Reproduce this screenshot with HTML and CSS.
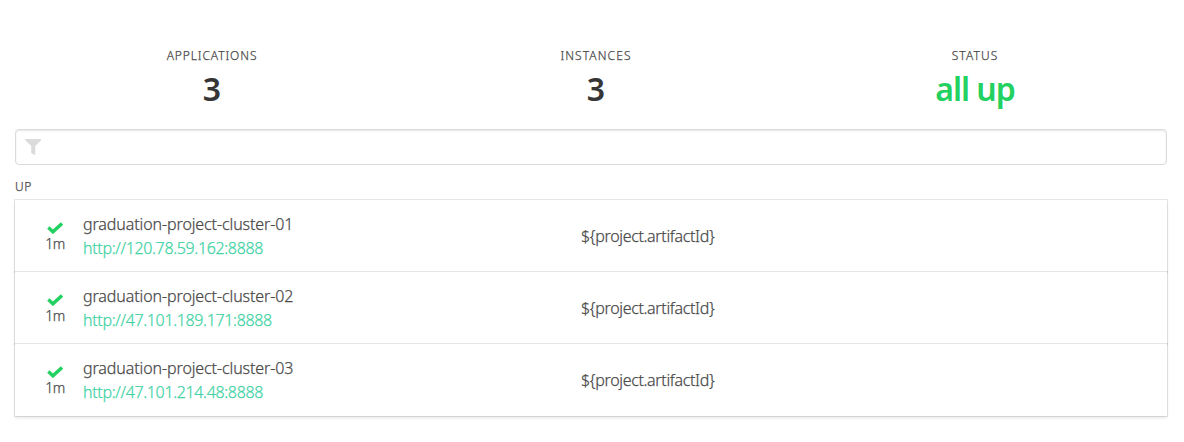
FILE: index.html
```html
<!DOCTYPE html>
<html lang="en">
<head>
<meta charset="utf-8">
<title>Applications</title>
<link rel="stylesheet" href="styles.css">
</head>
<body>
<main class="container">
  <section class="stats">
    <div class="stat"><p class="heading apps">Applications</p><p class="title">3</p></div>
    <div class="stat"><p class="heading">Instances</p><p class="title">3</p></div>
    <div class="stat"><p class="heading">Status</p><p class="title up">all up</p></div>
  </section>
  <div class="filter">
    <svg class="filter-icon" viewBox="0 0 17 17"><path d="M.5 0h15.3q.9.5.2 1.2L10.2 7v8.4q-.2.8-1 .4L6.2 14V7L.3 1.2Q-.3.5.5 0z"/></svg>
  </div>
  <p class="heading group">Up</p>
  <section class="list">
    <article class="row">
      <div class="state"><svg class="check" viewBox="0 0 16 12"><path d="M1.3 5.5l4.6 4.3L15 1.5"/></svg><span class="age">1m</span></div>
      <div class="name"><span class="label">graduation-project-cluster-01</span><a class="link">http://120.78.59.162:8888</a></div>
      <div class="version">${project.artifactId}</div>
    </article>
    <article class="row">
      <div class="state"><svg class="check" viewBox="0 0 16 12"><path d="M1.3 5.5l4.6 4.3L15 1.5"/></svg><span class="age">1m</span></div>
      <div class="name"><span class="label">graduation-project-cluster-02</span><a class="link">http://47.101.189.171:8888</a></div>
      <div class="version">${project.artifactId}</div>
    </article>
    <article class="row">
      <div class="state"><svg class="check" viewBox="0 0 16 12"><path d="M1.3 5.5l4.6 4.3L15 1.5"/></svg><span class="age">1m</span></div>
      <div class="name"><span class="label">graduation-project-cluster-03</span><a class="link">http://47.101.214.48:8888</a></div>
      <div class="version">${project.artifactId}</div>
    </article>
  </section>
</main>
</body>
</html>
```
FILE: styles.css
```css
* { box-sizing: border-box; margin: 0; padding: 0; }
body { background: #fff; color: #4a4a4a; font: 300 16px/24px "Noto Sans", "Open Sans", sans-serif; -webkit-text-stroke: .25px; }
.container { width: 1152px; margin-left: 15px; padding: 47px 0 26px; }
.stats { display: grid; grid-template-columns: 394px 374px 384px; height: 82px; text-align: center; }
.heading { font-size: 12px; line-height: 17px; letter-spacing: 1.1px; text-transform: uppercase; }
.heading.apps { letter-spacing: .9px; }
.title { font-size: 32px; line-height: 36px; font-weight: 600; color: #363636; margin-top: 7px; -webkit-text-stroke: 0; }
.title.up { color: #23d160; letter-spacing: -1px; }
.filter { height: 36px; border: 1px solid #dbdbdb; border-radius: 4px; box-shadow: inset 0 1px 2px rgba(10, 10, 10, .1); padding: 9px; }
.filter-icon { display: block; width: 17px; height: 17px; fill: #dbdbdb; }
.heading.group { margin-top: 13px; letter-spacing: .5px; }
.list { margin-top: 5px; }
.row { display: flex; align-items: center; height: 72px; box-shadow: 0 2px 3px rgba(10, 10, 10, .1), 0 0 0 1px rgba(10, 10, 10, .1); background: #fff; }
.state { width: 40px; margin-left: 20px; display: flex; flex-direction: column; align-items: center; padding-top: 4px; }
.check { width: 16px; height: 12px; fill: none; stroke: #23d160; stroke-width: 3.4; }
.age { font-size: 14px; line-height: 20px; letter-spacing: -.6px; }
.name { width: 498px; margin-left: 8px; display: flex; flex-direction: column; align-items: flex-start; }
.label { letter-spacing: -.1px; }
.link { color: #42d3a5; letter-spacing: -.34px; }
.version { letter-spacing: -.33px; }
```
